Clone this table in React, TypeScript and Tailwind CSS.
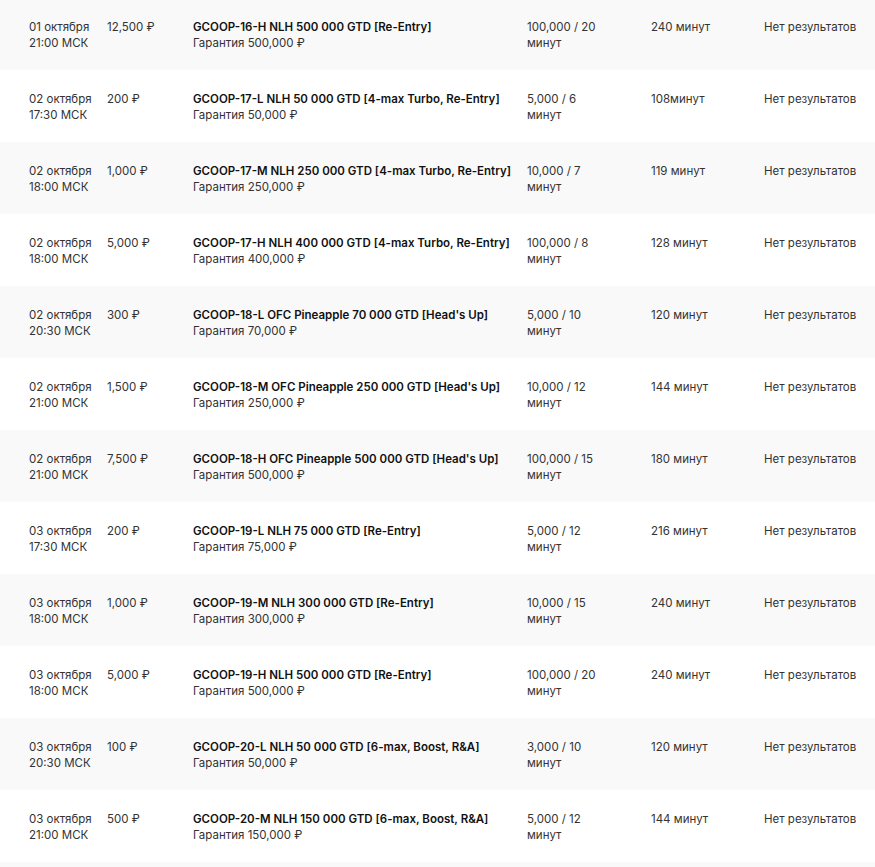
const rows = [
  ["01 октября", "21:00 МСК", "12,500 ₽", "GCOOP-16-H NLH 500 000 GTD [Re-Entry]", "500,000", "100,000 / 20", "240 минут"],
  ["02 октября", "17:30 МСК", "200 ₽", "GCOOP-17-L NLH 50 000 GTD [4-max Turbo, Re-Entry]", "50,000", "5,000 / 6", "108минут"],
  ["02 октября", "18:00 МСК", "1,000 ₽", "GCOOP-17-M NLH 250 000 GTD [4-max Turbo, Re-Entry]", "250,000", "10,000 / 7", "119 минут"],
  ["02 октября", "18:00 МСК", "5,000 ₽", "GCOOP-17-H NLH 400 000 GTD [4-max Turbo, Re-Entry]", "400,000", "100,000 / 8", "128 минут"],
  ["02 октября", "20:30 МСК", "300 ₽", "GCOOP-18-L OFC Pineapple 70 000 GTD [Head's Up]", "70,000", "5,000 / 10", "120 минут"],
  ["02 октября", "21:00 МСК", "1,500 ₽", "GCOOP-18-M OFC Pineapple 250 000 GTD [Head's Up]", "250,000", "10,000 / 12", "144 минут"],
  ["02 октября", "21:00 МСК", "7,500 ₽", "GCOOP-18-H OFC Pineapple 500 000 GTD [Head's Up]", "500,000", "100,000 / 15", "180 минут"],
  ["03 октября", "17:30 МСК", "200 ₽", "GCOOP-19-L NLH 75 000 GTD [Re-Entry]", "75,000", "5,000 / 12", "216 минут"],
  ["03 октября", "18:00 МСК", "1,000 ₽", "GCOOP-19-M NLH 300 000 GTD [Re-Entry]", "300,000", "10,000 / 15", "240 минут"],
  ["03 октября", "18:00 МСК", "5,000 ₽", "GCOOP-19-H NLH 500 000 GTD [Re-Entry]", "500,000", "100,000 / 20", "240 минут"],
  ["03 октября", "20:30 МСК", "100 ₽", "GCOOP-20-L NLH 50 000 GTD [6-max, Boost, R&A]", "50,000", "3,000 / 10", "120 минут"],
  ["03 октября", "21:00 МСК", "500 ₽", "GCOOP-20-M NLH 150 000 GTD [6-max, Boost, R&A]", "150,000", "5,000 / 12", "144 минут"],
];

function Row({ r, i }: { r: string[]; i: number }) {
  return (
    <div
      className={`grid h-[72px] grid-cols-[78px_86px_334px_124px_113px_1fr] pt-[21px] pl-[29px] text-[11.5px] leading-4 text-[#333] ${
        i % 2 === 0 ? "bg-[#f9f9f9]" : "bg-white"
      }`}
    >
      <div>
        <div>{r[0]}</div>
        <div>{r[1]}</div>
      </div>
      <div>{r[2]}</div>
      <div>
        <div className="font-semibold text-[#111]">{r[3]}</div>
        <div>Гарантия {r[4]} ₽</div>
      </div>
      <div className="w-[74px]">{r[5]} минут</div>
      <div>{r[6]}</div>
      <div className="whitespace-nowrap">Нет результатов</div>
    </div>
  );
}

export default function App() {
  return (
    <div className="h-[867px] w-full overflow-hidden bg-white font-['Inter',sans-serif]">
      <div className="-mt-[2px]">
        {rows.map((r, i) => (
          <Row key={i} r={r} i={i} />
        ))}
        <div className="h-[72px] bg-[#f9f9f9]" />
      </div>
    </div>
  );
}
